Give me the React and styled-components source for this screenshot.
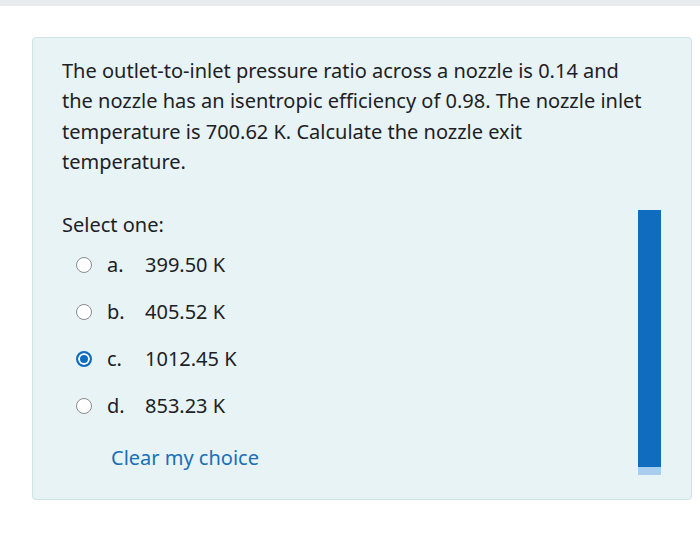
import styled, { createGlobalStyle } from 'styled-components';

const GlobalStyle = createGlobalStyle`
  body {
    margin: 0;
    background: #ffffff;
    font-family: "Noto Sans", "Open Sans", sans-serif;
    color: #1d2125;
  }
`;

const TopStrip = styled.div`
  height: 6px;
  background-color: #e8ecef;
`;

const Card = styled.div`
  margin: 31px 0 0 32px;
  width: 660px;
  height: 463px;
  box-sizing: border-box;
  background-color: #e7f3f5;
  border: 1px solid #cfe2e8;
  border-radius: 4px;
  padding: 18px 30px 0 29px;
`;

const Question = styled.div`
  font-size: 20px;
  line-height: 30.3px;
  width: 583px;
`;

const AnswerArea = styled.div`
  margin-top: 33px;
  display: flex;
  justify-content: space-between;
`;

const Answers = styled.div`
  display: flex;
  flex-direction: column;
`;

const Prompt = styled.div`
  font-size: 20px;
  line-height: 30px;
  margin-bottom: 1px;
`;

const Option = styled.label`
  display: flex;
  align-items: center;
  height: 47px;
  padding-left: 14px;
  font-size: 20px;
`;

const Radio = styled.span`
  width: 16px;
  height: 16px;
  box-sizing: border-box;
  border-radius: 50%;
  border: ${({ checked }) => (checked ? '2px solid #0f6cbf' : '1.5px solid #8a8d90')};
  background-color: ${({ checked }) => (checked ? '#0f6cbf' : '#ffffff')};
  box-shadow: ${({ checked }) => (checked ? 'inset 0 0 0 2px #ffffff' : 'none')};
  margin-right: 15px;
`;

const Letter = styled.span`
  width: 38px;
`;

const Value = styled.span``;

const ClearLink = styled.a`
  margin: 14px 0 0 49px;
  font-size: 20px;
  line-height: 30px;
  color: #1a6fb5;
  text-decoration: none;
  cursor: pointer;
`;

const Bar = styled.div`
  width: 23px;
  height: 265px;
  background: linear-gradient(#0f6cbf 0, #0f6cbf 257px, #a8cdef 257px);
`;

const options = [
  { letter: 'a.', value: '399.50 K' },
  { letter: 'b.', value: '405.52 K' },
  { letter: 'c.', value: '1012.45 K', checked: true },
  { letter: 'd.', value: '853.23 K' },
];

const App = () => {
  return (
    <>
      <GlobalStyle />
      <TopStrip />
      <Card>
        <Question>
          The outlet-to-inlet pressure ratio across a nozzle is 0.14 and the nozzle has an
          isentropic efficiency of 0.98. The nozzle inlet temperature is 700.62 K. Calculate
          the nozzle exit temperature.
        </Question>
        <AnswerArea>
          <Answers>
            <Prompt>Select one:</Prompt>
            {options.map((opt) => (
              <Option key={opt.letter}>
                <Radio checked={opt.checked} />
                <Letter>{opt.letter}</Letter>
                <Value>{opt.value}</Value>
              </Option>
            ))}
            <ClearLink>Clear my choice</ClearLink>
          </Answers>
          <Bar />
        </AnswerArea>
      </Card>
    </>
  );
};

export default App;
